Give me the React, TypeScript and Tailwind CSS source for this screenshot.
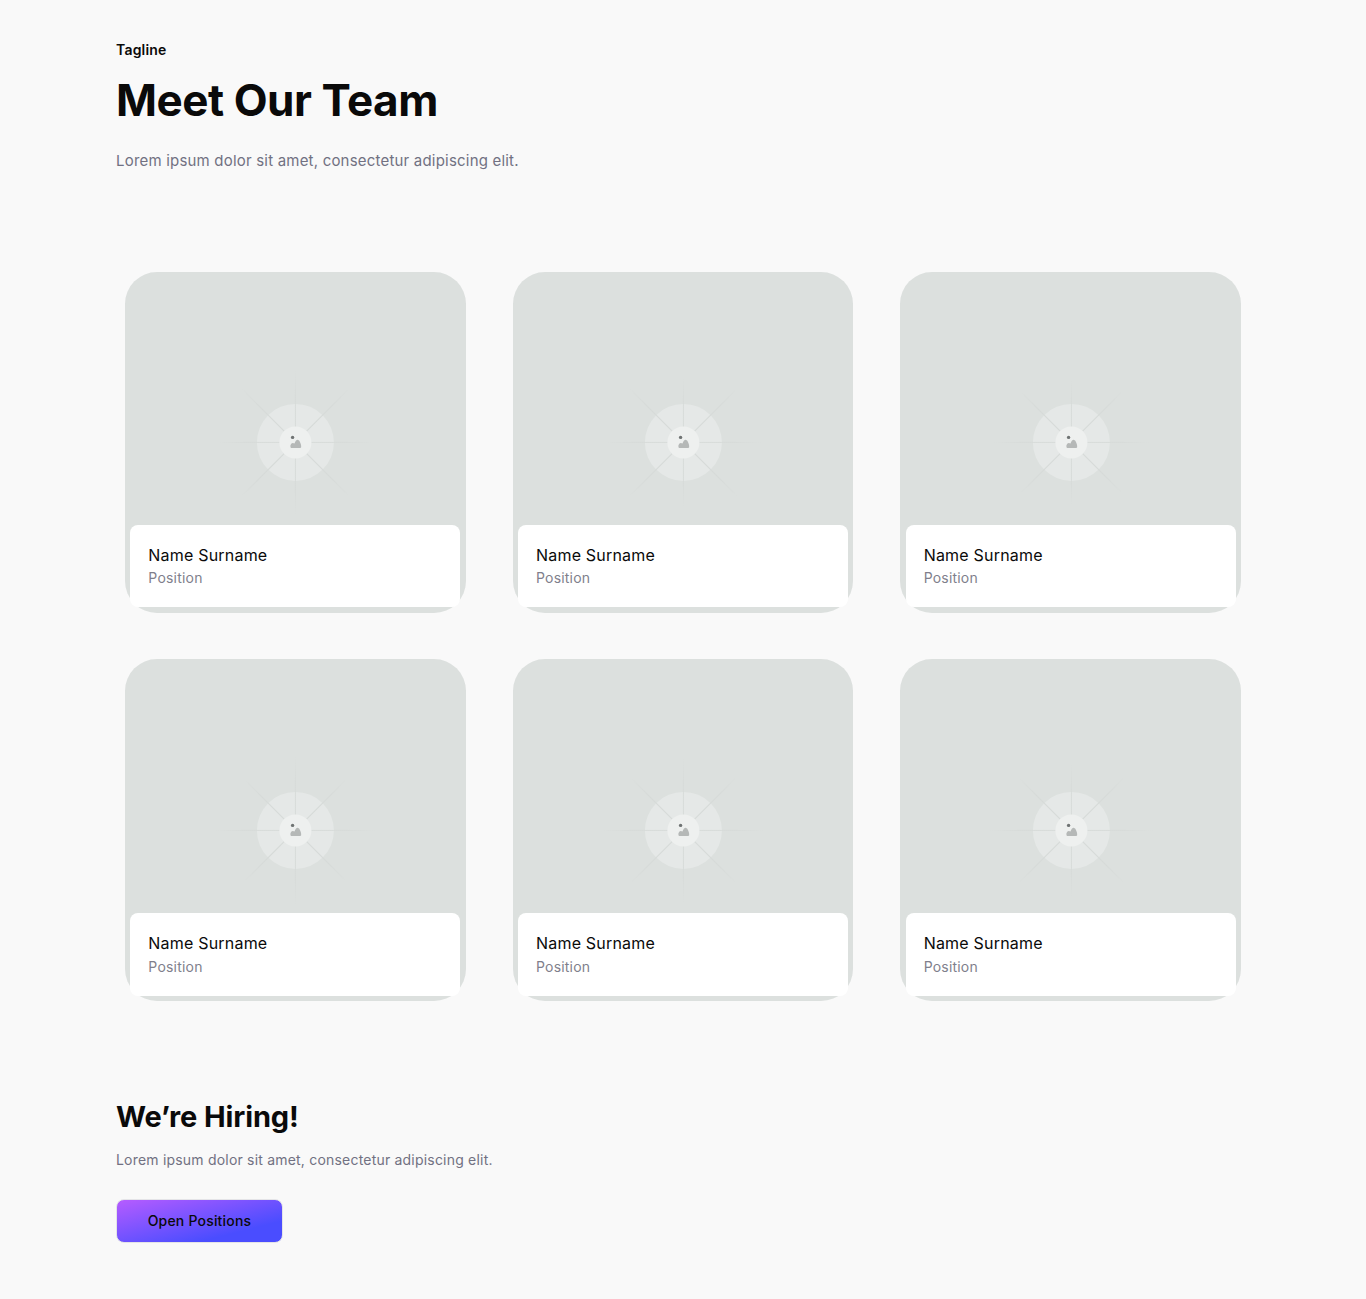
const font = { fontFamily: "Inter, 'Liberation Sans', sans-serif", letterSpacing: "0.2px" };

// ray lengths differ a little from card to card in the picture: vertical, horizontal, diagonal
const spreads = [
  { v: 74, h: 78, d: 55 },
  { v: 66, h: 78, d: 55 },
  { v: 64, h: 78, d: 52 },
  { v: 76, h: 80, d: 52 },
  { v: 74, h: 82, d: 54 },
  { v: 68, h: 82, d: 54 },
];

type Spread = { v: number; h: number; d: number };

const Placeholder = ({ id, spread }: { id: number; spread: Spread }) => {
  const { v, h, d } = spread;
  const rays = [
    [0, -1, v],
    [0, 1, v],
    [-1, 0, h],
    [1, 0, h],
    [-1, -1, d],
    [1, -1, d],
    [-1, 1, d],
    [1, 1, d],
  ];
  return (
    <svg viewBox="-85 -85 170 170" className="w-[170px] h-[170px] translate-x-[0.4px] translate-y-[0.4px]" fill="none">
      <circle cx="0" cy="0" r="38.5" fill="#e5e8e7" />
      {rays.map(([dx, dy, len], i) => {
        const gid = `fade-${id}-${i}`;
        const diagonal = dx !== 0 && dy !== 0;
        const reach = diagonal ? len * Math.SQRT2 : len;
        const tone = diagonal ? "#d6dad8" : "#d7dbd9";
        return (
          <g key={i}>
            <radialGradient id={gid} gradientUnits="userSpaceOnUse" cx="0" cy="0" r={reach}>
              <stop offset="0.65" stopColor={tone} />
              <stop offset="1" stopColor={tone} stopOpacity="0" />
            </radialGradient>
            <line x1={dx * 11} y1={dy * 11} x2={dx * len} y2={dy * len} stroke={`url(#${gid})`} strokeWidth={diagonal ? 1.2 : 1} />
          </g>
        );
      })}
      <circle cx="0" cy="0" r="16" fill="#eef0ef" />
      <circle cx="-2.8" cy="-5" r="1.7" fill="#6f7373" />
      <path d="M-4.3 5.6 Q-5.2 5 -5 3 Q-4.6 0.6 -2.8 0.5 Q-1.4 0.5 -0.9 1.2 Q0.2 -2.4 2.4 -2.6 Q4.2 -2 5 0.6 Q6.2 3.4 5.8 4.8 Q5.6 5.6 4.6 5.6 Z" fill="#b5b8b7" />
    </svg>
  );
};

const Card = ({ id }: { id: number }) => (
  <div className={`relative rounded-[32px] bg-[#dce0de] ${id < 3 ? "aspect-square" : "h-[342px]"}`}>
    <div className={`absolute inset-0 flex items-center justify-center ${id < 3 ? "" : "pb-[1px]"}`}>
      <Placeholder id={id} spread={spreads[id]} />
    </div>
    <div className="absolute left-[5.33px] right-[5.33px] bottom-[5.33px] h-[82.5px] rounded-lg bg-white px-[18px] pt-[20px]">
      <p className="text-base leading-5 text-[#0a0a0a]">Name Surname</p>
      <p className="mt-[3.6px] text-sm leading-5 text-[#7f7f8c]">Position</p>
    </div>
  </div>
);

export default function App() {
  return (
    <div className="min-h-[1299px] bg-[#f9f9f9] pt-[40px]" style={font}>
      <header className="px-[116px]">
        <p className="text-sm leading-5 font-semibold text-[#0a0a0a]">Tagline</p>
        <h1 className="mt-[12px] text-[44px] leading-[56px] font-bold tracking-[-0.46px] text-[#0a0a0a]">Meet Our Team</h1>
        <p className="mt-[21px] text-[15px] leading-6 text-[#717182]">Lorem ipsum dolor sit amet, consectetur adipiscing elit.</p>
      </header>

      <section className="mt-[99px] grid grid-cols-3 gap-x-[47px] gap-y-[46.33px] px-[125px]">
        {[0, 1, 2, 3, 4, 5].map((i) => (
          <Card key={i} id={i} />
        ))}
      </section>

      <section className="mt-[97.5px] px-[116px]">
        <h2 className="text-[29px] leading-9 font-bold tracking-[-0.12px] text-[#0a0a0a]">We’re Hiring!</h2>
        <p className="mt-[13px] text-sm leading-6 text-[#717182]">Lorem ipsum dolor sit amet, consectetur adipiscing elit.</p>
        <button className="mt-[27px] block h-[44px] w-[167px] rounded-lg border border-[#e4e4e7] bg-linear-to-br/srgb from-[#b65cff] via-[#4a4dff] via-75% to-[#4a4dff] text-sm font-medium text-[#0a0a0a]">
          Open Positions
        </button>
      </section>
    </div>
  );
}
